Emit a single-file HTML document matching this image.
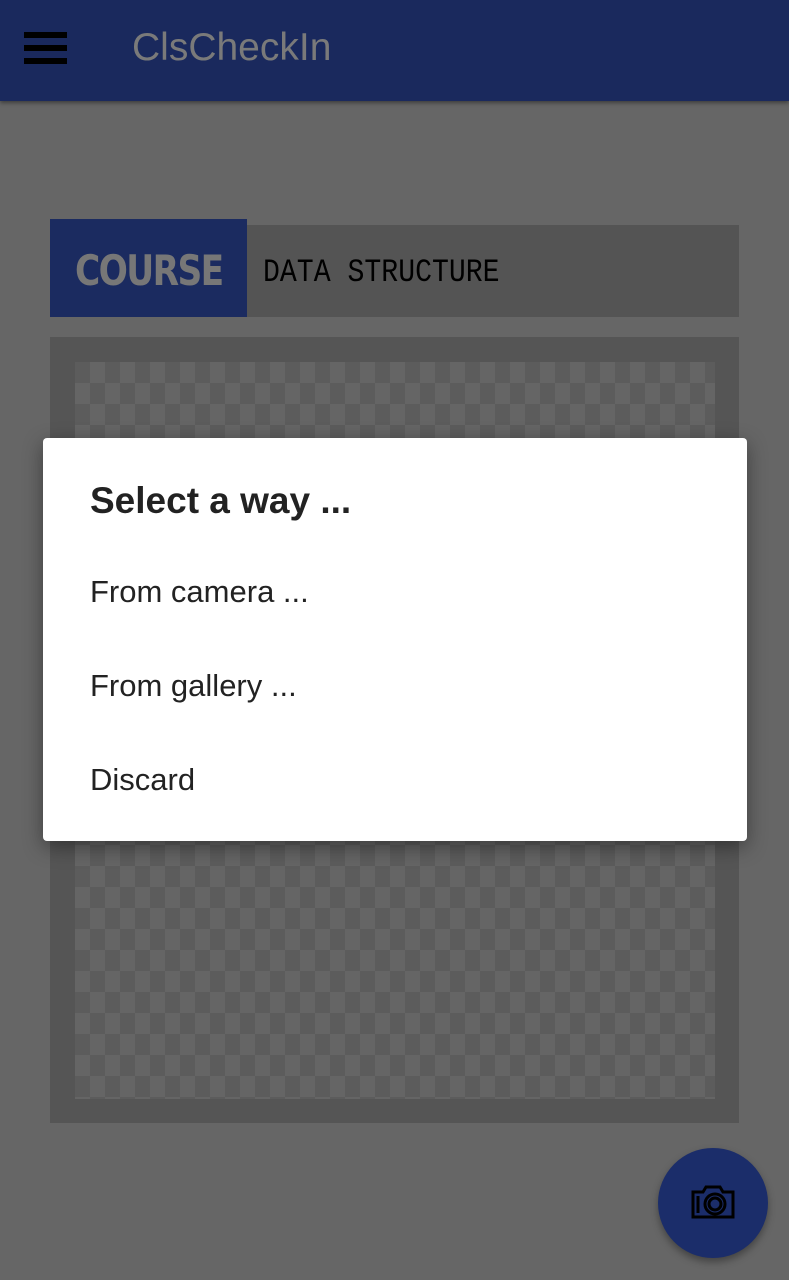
<!DOCTYPE html>
<html><head><style>
body{margin:0;width:789px;height:1280px;background:#666;position:relative;overflow:hidden;font-family:"Liberation Sans",sans-serif}
.bar{position:absolute;left:0;top:0;width:789px;height:101px;background:#1a295d;box-shadow:0 2px 4px rgba(0,0,0,.4)}
.ham{position:absolute;left:24px;width:43px;height:6px;background:#000}
.title{position:absolute;left:132px;top:26px;font-size:39px;color:#7a7a7a}
.cb{position:absolute;left:50px;top:225px;width:689px;height:92px;background:#545454}
.cl{position:absolute;left:50px;top:219px;width:197px;height:98px;background:#1b2b60}
.cl span{position:absolute;left:25px;top:27px;color:#777;font:900 42px "DejaVu Sans",sans-serif;letter-spacing:-2px;transform:scaleX(.82);transform-origin:left;white-space:nowrap}
.ds{position:absolute;left:263px;top:254px;font:32px "Liberation Mono",monospace;color:#000;transform:scaleX(.88);transform-origin:left;white-space:nowrap}
.fr{position:absolute;left:50px;top:337px;width:689px;height:786px;background:#555}
.ck{position:absolute;left:75px;top:362px;width:640px;height:737px;background:conic-gradient(#656565 25%,#5c5c5c 0 50%,#656565 0 75%,#5c5c5c 0);background-size:30px 42px}
.dlg{position:absolute;left:43px;top:438px;width:704px;height:403px;background:#fff;border-radius:4px;box-shadow:0 6px 20px rgba(0,0,0,.4)}
.h{position:absolute;left:47px;top:42px;font-size:37px;font-weight:bold;color:#222}
.it{position:absolute;left:47px;font-size:31px;color:#222}
.fab{position:absolute;left:658px;top:1148px;width:110px;height:110px;border-radius:50%;background:#1b2d6a;box-shadow:0 4px 8px rgba(0,0,0,.35)}
</style></head><body>
<div class="bar"><div class="ham" style="top:32px"></div><div class="ham" style="top:45px"></div><div class="ham" style="top:58px"></div><div class="title">ClsCheckIn</div></div>
<div class="cb"></div><div class="cl"><span>COURSE</span></div><div class="ds">DATA STRUCTURE</div>
<div class="fr"></div><div class="ck"></div>
<div class="dlg"><div class="h">Select a way ...</div>
<div class="it" style="top:136px">From camera ...</div>
<div class="it" style="top:230px">From gallery ...</div>
<div class="it" style="top:324px">Discard</div></div>
<div class="fab"><svg width="110" height="110" viewBox="0 0 110 110"><g fill="none" stroke="#000" stroke-width="3"><path d="M35 44h10l3-5h14l3 5h10v25H35z"/><circle cx="57" cy="56" r="10"/><circle cx="57" cy="56" r="6"/><path d="M40 48v17"/></g></svg></div>
</body></html>
